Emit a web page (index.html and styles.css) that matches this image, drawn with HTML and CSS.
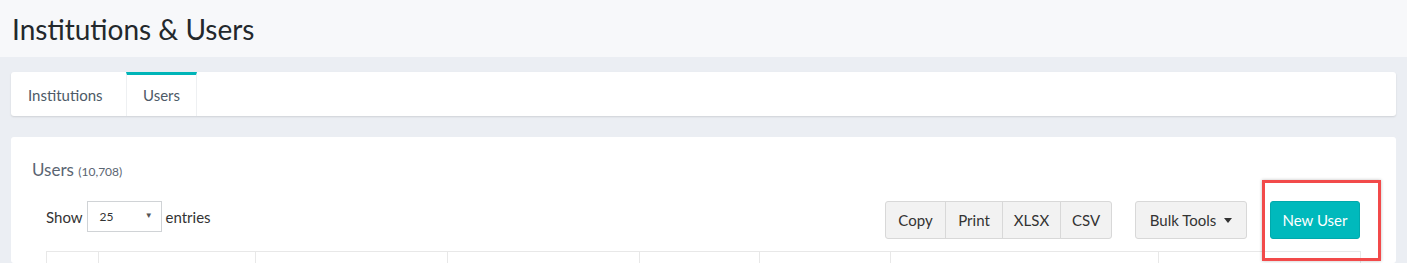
FILE: index.html
```html
<!DOCTYPE html>
<html>
<head>
<meta charset="utf-8">
<link rel="stylesheet" href="styles.css">
</head>
<body>
<header class="page-header">
  <h1 class="page-title">Institutions &amp; Users</h1>
</header>
<main class="content">
  <nav class="tabs-card">
    <a class="tab first">Institutions</a>
    <a class="tab active">Users</a>
  </nav>
  <section class="card">
    <h2 class="card-title">Users <small>(10,708)</small></h2>
    <div class="dt-wrap">
      <div class="toolbar">
        <label class="length">Show
          <span class="select"><span>25</span><span class="arrow">▼</span></span>
          entries</label>
        <div class="actions">
          <div class="btn-group">
            <button class="btn">Copy</button>
            <button class="btn">Print</button>
            <button class="btn">XLSX</button>
            <button class="btn">CSV</button>
          </div>
          <button class="btn bulk">Bulk Tools <span class="caret"></span></button>
          <span class="highlight-wrap">
            <button class="btn primary">New User</button>
            <span class="highlight"></span>
          </span>
        </div>
      </div>
      <table class="grid">
        <tr>
          <th class="c1"></th><th class="c2"></th><th class="c3"></th><th class="c4"></th>
          <th class="c5"></th><th class="c6"></th><th class="c7"></th><th class="c8"></th>
        </tr>
      </table>
    </div>
  </section>
</main>
</body>
</html>
```

FILE: styles.css
```css
* { box-sizing: border-box; }
html, body { margin: 0; padding: 0; }
body {
  background: #ebeef3;
  font-family: "Lato", "Source Sans Pro", sans-serif;
  color: #333;
  overflow: hidden;
  height: 263px;
}
.page-header {
  background: #f7f8fa;
  height: 57px;
  padding: 0 12px;
  display: flex;
  align-items: center;
}
.page-title {
  margin: 0;
  font-weight: 400;
  font-size: 28px;
  color: #23282c;
}
.content {
  padding: 15px 11px 0 11px;
}
.tabs-card {
  background: #fff;
  height: 44px;
  display: flex;
  border-radius: 3px;
  box-shadow: 0 1px 2px rgba(0,0,0,0.12);
}
.tab {
  display: flex;
  align-items: center;
  justify-content: center;
  font-size: 15px;
  color: #4d5a67;
  border-top: 3px solid transparent;
  padding-bottom: 2px;
  white-space: nowrap;
}
.tab.first {
  width: 115px;
  padding-left: 17px;
  justify-content: flex-start;
}
.tab.active {
  width: 71px;
  border-top-color: #00b5b8;
  border-left: 1px solid #eef0f2;
  border-right: 1px solid #eef0f2;
}
.card {
  margin-top: 21px;
  background: #fff;
  border-radius: 3px;
  padding: 22px 0 0 0;
  height: 126px;
}
.card-title {
  margin: 0 0 0 21px;
  font-weight: 400;
  font-size: 17px;
  color: #5a6572;
}
.card-title small {
  font-size: 12px;
  color: #5a6572;
}
.dt-wrap {
  padding: 0 36px 0 35px;
}
.toolbar {
  display: flex;
  justify-content: space-between;
  align-items: flex-start;
  margin-top: 21px;
  height: 50px;
}
.length {
  display: flex;
  align-items: center;
  font-size: 15px;
  color: #333;
  height: 31px;
}
.select {
  display: inline-flex;
  justify-content: space-between;
  align-items: center;
  width: 75px;
  height: 31px;
  border: 1px solid #d0d3d6;
  margin: 0 4px 0 4px;
  padding: 0 8px 0 12px;
  font-size: 12px;
  color: #333;
}
.select .arrow {
  font-size: 8px;
  color: #555;
  margin-top: -4px;
}
.actions {
  display: flex;
  gap: 23px;
  align-items: flex-start;
}
.btn-group {
  display: flex;
}
.btn {
  font-family: inherit;
  font-size: 15px;
  height: 38px;
  background: #f2f2f2;
  border: 1px solid #d8d8d8;
  color: #333;
  padding: 0 10px;
  border-radius: 3px;
  display: inline-flex;
  align-items: center;
  justify-content: center;
  white-space: nowrap;
  margin: 0;
}
.btn-group .btn { border-radius: 0; margin-left: -1px; }
.btn-group .btn:first-child { border-radius: 3px 0 0 3px; margin-left: 0; width: 61px; }
.btn-group .btn:nth-child(2) { width: 58px; }
.btn-group .btn:nth-child(3) { width: 59px; }
.btn-group .btn:last-child { border-radius: 0 3px 3px 0; width: 52px; }
.bulk { width: 112px; gap: 8px; }
.caret {
  display: inline-block;
  width: 0; height: 0;
  border-left: 4px solid transparent;
  border-right: 4px solid transparent;
  border-top: 5px solid #333;
}
.highlight-wrap { position: relative; display: inline-block; }
.btn.primary {
  background: #00b9bc;
  border-color: #00a9ac;
  color: #fff;
  width: 90px;
  padding: 0 4px;
}
.highlight {
  position: absolute;
  left: -8px;
  top: -21px;
  width: 119px;
  height: 81px;
  border: 3px solid #f24a4a;
  box-shadow: 0 0 3px rgba(0,0,0,0.25);
  pointer-events: none;
}
.grid {
  border-collapse: collapse;
  width: 1314px;
  table-layout: fixed;
}
.grid th {
  border: 1px solid #e8e8e8;
  height: 30px;
  padding: 0;
}
.c1 { width: 52px; }
.c2 { width: 157px; }
.c3 { width: 192px; }
.c4 { width: 192px; }
.c5 { width: 120px; }
.c6 { width: 131px; }
.c7 { width: 268px; }
.c8 { width: 202px; }
```
